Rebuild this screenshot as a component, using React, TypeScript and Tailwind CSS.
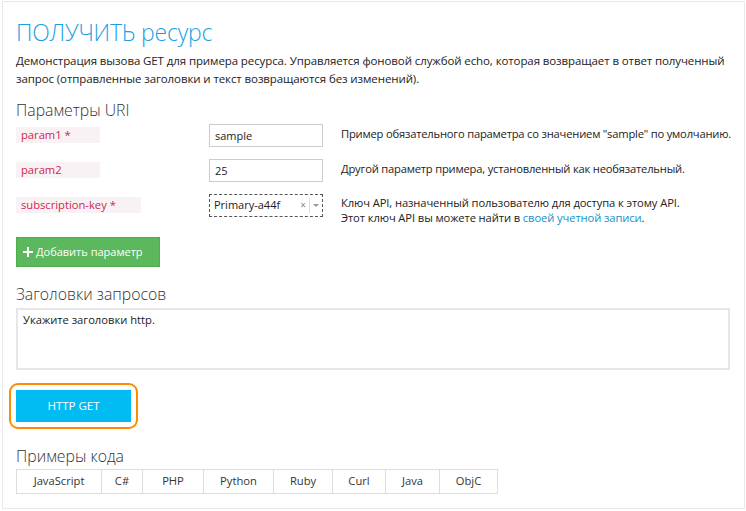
import React from "react";

const params = [
  { name: "param1 *", value: "sample", desc: ['Пример обязательного параметра со значением "sample" по умолчанию.'] },
  { name: "param2", value: "25", desc: ["Другой параметр примера, установленный как необязательный."] },
];

const langs = [
  { label: "JavaScript", w: "w-[84px]" },
  { label: "C#", w: "w-[41px]" },
  { label: "PHP", w: "w-[61px]" },
  { label: "Python", w: "w-[70px]" },
  { label: "Ruby", w: "w-[59px]" },
  { label: "Curl", w: "w-[53px]" },
  { label: "Java", w: "w-[54px]" },
  { label: "ObjC", w: "w-[58px]" },
];

function ParamLabel({ name }: { name: string }) {
  return (
    <div className="w-[193px] pt-[3px] flex">
      <span className="min-w-[84px] h-[16px] bg-[#f9f2f4] text-[#d0264e] text-[11.2px] leading-[16px] pl-[5px] pr-[25px]">{name}</span>
    </div>
  );
}

export default function App() {
  return (
    <div className="w-[746px] h-[511px] bg-white pl-[2px] pt-[1px] font-['Open_Sans','Noto_Sans',sans-serif] text-[#222]">
      <div className="w-[743px] h-[508px] border border-[#e9e9e9] pl-[13px] pt-[13px]">
        {/* Title */}
        <h1 className="text-[23px] font-light text-[#1ba1e2] leading-[34px] tracking-[-0.2px]">ПОЛУЧИТЬ ресурс</h1>
        <p className="mt-[3px] text-[11.5px] leading-[18px] tracking-[-0.1px] w-[718px]">
          Демонстрация вызова GET для примера ресурса. Управляется фоновой службой echo, которая возвращает в ответ полученный
          запрос (отправленные заголовки и текст возвращаются без изменений).
        </p>

        {/* URI params */}
        <h2 className="mt-[11px] text-[15.8px] font-light leading-[22px] text-[#333]">Параметры URI</h2>
        <div className="mt-[3px] flex flex-col gap-[12px]">
          {params.map((p) => (
            <div key={p.name} className="flex items-start">
              <ParamLabel name={p.name} />
              <div className="w-[114px] h-[23px] border border-[#ccc] px-[5px] text-[11px] leading-[21px]">{p.value}</div>
              <div className="ml-[18px] pt-[2px] text-[11.2px] leading-[16px] tracking-[-0.2px]">
                {p.desc.map((d) => (
                  <div key={d}>{d}</div>
                ))}
              </div>
            </div>
          ))}
          <div className="flex items-start">
            <ParamLabel name="subscription-key *" />
            <div className="w-[114px] h-[23px] border border-dashed border-[#555] pl-[4px] flex items-center text-[11px]">
              <span className="flex-1">Primary-a44f</span>
              <span className="text-[10px] text-[#888] pr-[3px]">×</span>
              <span className="h-[15px] border-l border-[#ddd] px-[3px] flex items-center">
                <svg width="6" height="4" viewBox="0 0 6 4"><path d="M0 0h6L3 3z" fill="#999" /></svg>
              </span>
            </div>
            <div className="ml-[18px] pt-[1px] text-[11.2px] leading-[15px] tracking-[-0.1px]">
              <div>Ключ API, назначенный пользователю для доступа к этому API.</div>
              <div>
                Этот ключ API вы можете найти в <span className="text-[#1592c9]">своей учетной записи</span>.
              </div>
            </div>
          </div>
        </div>

        <button className="mt-[12px] w-[144px] h-[30px] bg-[#5cb85c] border border-[#4cae4c] text-white text-[11px] flex items-center pl-[6px] gap-[3px]">
          <svg width="10" height="10" viewBox="0 0 10 10"><path d="M4 0h2v4h4v2H6v4H4V6H0V4h4z" fill="white" /></svg>
          Добавить параметр
        </button>

        {/* Headers */}
        <h2 className="mt-[16px] text-[15.8px] font-light leading-[22px] text-[#333]">Заголовки запросов</h2>
        <div className="mt-[3px] w-[714px] h-[62px] border-2 border-[#e6e6e6] px-[5px] pt-[2px] text-[11.2px] leading-[16px]">
          Укажите заголовки http.
        </div>

        {/* Send */}
        <div className="mt-[13px] -ml-[7px] w-[129px] h-[46px] rounded-[9px] border-2 border-[#ff8c00] p-[5px]">
          <button className="w-full h-full bg-[#00bcf2] text-white text-[11.5px] flex items-center justify-center">HTTP GET</button>
        </div>

        {/* Code samples */}
        <h2 className="mt-[16px] text-[15.8px] font-light leading-[22px] text-[#333]">Примеры кода</h2>
        <div className="mt-[2px] flex border border-[#ddd] w-fit">
          {langs.map((l, i) => (
            <div
              key={l.label}
              className={`${l.w} h-[23px] flex items-center justify-center text-[11.2px] text-[#333] ${i > 0 ? "border-l border-[#ddd]" : ""}`}
            >
              {l.label}
            </div>
          ))}
        </div>
      </div>
    </div>
  );
}
